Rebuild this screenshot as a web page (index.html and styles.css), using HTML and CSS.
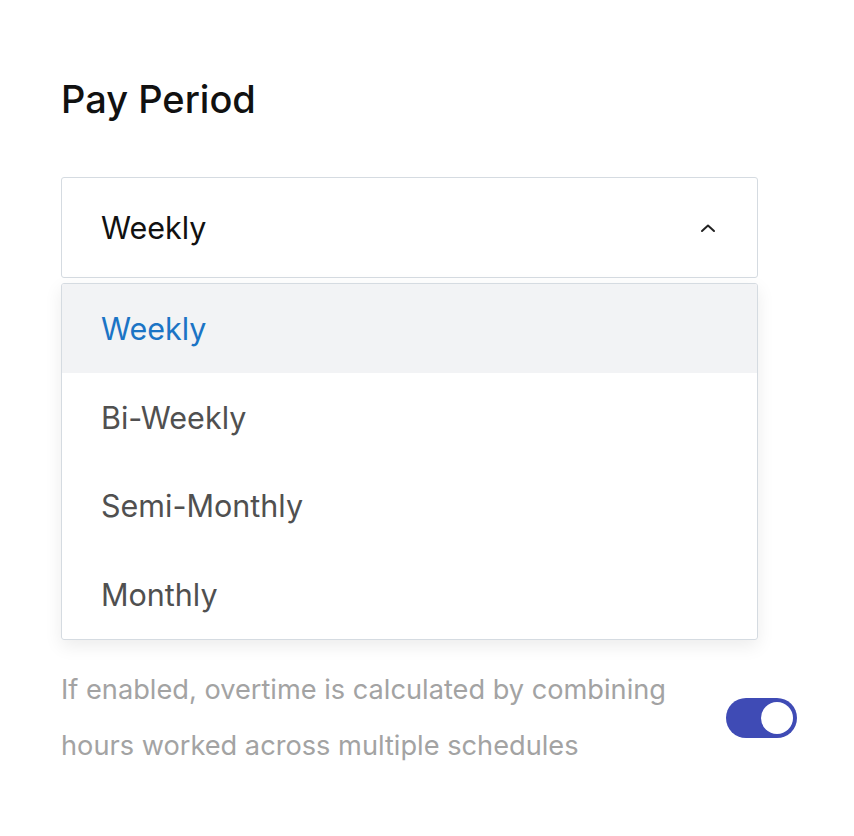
FILE: index.html
```html
<!DOCTYPE html>
<html lang="en">
<head>
    <meta charset="UTF-8">
    <meta name="viewport" content="width=device-width, initial-scale=1.0">
    <title>Pay Period</title>
    <link rel="stylesheet" href="styles.css">
</head>
<body>
    <div class="page">
        <h1 class="title">Pay Period</h1>

        <div class="select">
            <span class="select-value">Weekly</span>
            <svg class="chevron" width="16" height="10" viewBox="0 0 16 10">
                <path d="M2 8 L8 2.5 L14 8" fill="none" stroke="#222" stroke-width="2" stroke-linecap="round" stroke-linejoin="round"/>
            </svg>
        </div>

        <ul class="menu">
            <li class="menu-item active">Weekly</li>
            <li class="menu-item">Bi-Weekly</li>
            <li class="menu-item">Semi-Monthly</li>
            <li class="menu-item">Monthly</li>
        </ul>

        <div class="setting">
            <p class="setting-text">If enabled, overtime is calculated by combining hours worked across multiple schedules</p>
            <div class="toggle on"><span class="knob"></span></div>
        </div>
    </div>
</body>
</html>
```

FILE: styles.css
```css
body {
    margin: 0;
    font-family: Inter, "Open Sans", sans-serif;
    background: #fff;
}
.page {
    padding: 74px 0 0 61px;
}
.title {
    margin: 0 0 53px;
    font-size: 38px;
    font-weight: 500;
    color: #111;
    line-height: 50px;
}
.select {
    width: 697px;
    height: 101px;
    box-sizing: border-box;
    border: 1px solid #d5dbe1;
    border-radius: 3px;
    display: flex;
    align-items: center;
    justify-content: space-between;
    padding: 0 41px 0 39px;
}
.select-value {
    font-size: 30.5px;
    color: #111;
}
.chevron {
    display: block;
}
.menu {
    list-style: none;
    margin: 5px 0 0;
    padding: 0;
    width: 697px;
    box-sizing: border-box;
    border: 1px solid #d5dbe1;
    border-radius: 3px;
    box-shadow: 0 6px 18px rgba(0, 0, 0, 0.08);
    overflow: hidden;
}
.menu-item {
    height: 88.75px;
    display: flex;
    align-items: center;
    padding-left: 39px;
    font-size: 30.5px;
    color: #505050;
}
.menu-item.active {
    background: #f2f3f5;
    color: #1b74c5;
}
.setting {
    width: 736px;
    margin-top: 22px;
    display: flex;
    align-items: center;
    justify-content: space-between;
}
.setting-text {
    margin: 0;
    width: 630px;
    font-size: 27.2px;
    line-height: 56px;
    color: #a3a3a3;
}
.toggle {
    width: 71px;
    height: 40px;
    border-radius: 20px;
    background: #3f4bb5;
    position: relative;
    flex-shrink: 0;
}
.knob {
    position: absolute;
    top: 4px;
    right: 4px;
    width: 32px;
    height: 32px;
    border-radius: 50%;
    background: #fff;
}
```
